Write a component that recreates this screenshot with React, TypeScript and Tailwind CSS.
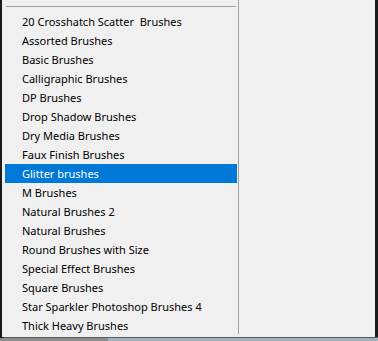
import React from "react";

const items = [
  "20 Crosshatch Scatter  Brushes",
  "Assorted Brushes",
  "Basic Brushes",
  "Calligraphic Brushes",
  "DP Brushes",
  "Drop Shadow Brushes",
  "Dry Media Brushes",
  "Faux Finish Brushes",
  "Glitter brushes",
  "M Brushes",
  "Natural Brushes 2",
  "Natural Brushes",
  "Round Brushes with Size",
  "Special Effect Brushes",
  "Square Brushes",
  "Star Sparkler Photoshop Brushes 4",
  "Thick Heavy Brushes",
];

export default function App() {
  return (
    <div
      className="w-[378px] h-[341px] bg-[#1b1b1b] overflow-hidden flex flex-col"
      style={{ fontFamily: '"Noto Sans", "Open Sans", sans-serif' }}
    >
      <div className="flex h-[337px] ml-[2px] w-[373px] bg-[#f0f0f0]">
        <div className="w-[236px] flex flex-col pt-[6px]">
          <div className="ml-[4px] w-[230px] h-px bg-[#a0a0a0]" />
          <div className="mt-[5px] flex flex-col">
            {items.map((t) => {
              const sel = t === "Glitter brushes";
              return (
                <div
                  key={t}
                  className={
                    "ml-[3px] w-[232px] h-[19px] pl-[17px] text-[11px] leading-[19px] whitespace-pre " +
                    (sel ? "bg-[#0078d7] text-white" : "text-black")
                  }
                >
                  {t}
                </div>
              );
            })}
          </div>
        </div>
        <div className="w-px h-[334px] bg-[#a0a0a0]" />
        <div className="flex-1" />
      </div>
      <div className="h-px bg-[#5a5a5a] ml-[4px]" />
      <div className="flex flex-1">
        <div className="w-[108px] bg-[#8c8c8c]" />
        <div className="flex-1 bg-[#9fb2c0]" />
      </div>
    </div>
  );
}
